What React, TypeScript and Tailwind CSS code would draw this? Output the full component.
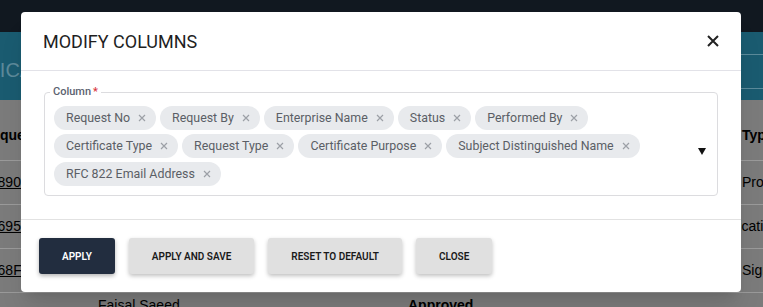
import React from "react"

const columns = [
  "Request No",
  "Request By",
  "Enterprise Name",
  "Status",
  "Performed By",
  "Certificate Type",
  "Request Type",
  "Certificate Purpose",
  "Subject Distinguished Name",
  "RFC 822 Email Address",
]

const rows = [
  { id: "12890D4E", by: "", status: "", type: "Protocol" },
  { id: "316950AB", by: "", status: "", type: "Certification", shift: true },
  { id: "4768F5C2", by: "", status: "", type: "Signing" },
  { id: "", by: "Faisal Saeed", status: "Approved", type: "" },
]

function Chip({ label }: { label: string }) {
  return (
    <span className="flex h-6 items-center rounded-full bg-[#e8eaed] pl-3 pr-[10px] text-[12.4px] text-[#5b5f66]">
      {label}
      <svg width="8" height="8" viewBox="0 0 8 8" className="ml-2">
        <path d="M1 1L7 7M7 1L1 7" stroke="#9ca0a6" strokeWidth="1.2" />
      </svg>
    </span>
  )
}

function Button({ label, primary }: { label: string; primary?: boolean }) {
  return (
    <button
      className={
        primary
          ? "h-9 rounded-[3px] bg-[#222d3f] px-[23px] text-[10px] font-semibold uppercase text-white shadow-[0_2px_4px_rgba(0,0,0,0.3)]"
          : "h-9 rounded-[3px] bg-[#e0e0e0] px-[23px] text-[10px] font-semibold uppercase text-[#1a1a1a] shadow-[0_2px_4px_rgba(0,0,0,0.25)]"
      }
    >
      {label}
    </button>
  )
}

export default function App() {
  return (
    <div className="relative h-[307px] w-[763px] overflow-hidden bg-[#7b7b7b] font-['Liberation_Sans',Arial,sans-serif] text-[14px] text-black">
      {/* page behind the modal, already dimmed */}
      <div className="h-8 bg-[#111820]" />
      <div className="flex h-[68px] items-center justify-between bg-[#1a5b70]">
        <span className="-ml-[72px] pt-[8px] text-[20px] text-[#5d8a9a]">CERTIFICATE REQUESTS</span>
        <div className="-mr-[40px] mt-[10px] h-[35px] w-[200px] border border-[#5b8a9a]" />
      </div>
      <div className="-ml-[18px]">
        <div className="flex h-[60px] items-center pt-[10px] font-bold">
          <div className="w-[116px] shrink-0">Request No</div>
          <div className="w-[310px] shrink-0">Request By</div>
          <div className="w-[334px] shrink-0">Status</div>
          <div className="shrink-0">Type</div>
        </div>
        {rows.map((r, i) => (
          <div
            key={i}
            className={
              i === 3
                ? "flex h-[44px] items-start border-t border-[#9a9a9a] pt-[2px]"
                : "flex h-[44px] items-center border-t border-[#9a9a9a]"
            }
          >
            <div className="w-[116px] shrink-0 underline">{r.id}</div>
            <div className="w-[310px] shrink-0">{r.by}</div>
            <div className="w-[334px] shrink-0 font-bold">{r.status}</div>
            <div className={r.shift ? "-ml-[37px] shrink-0 whitespace-nowrap" : "shrink-0 whitespace-nowrap"}>
              {r.type}
            </div>
          </div>
        ))}
      </div>

      {/* modal */}
      <div className="absolute inset-0 flex pl-[21px] pt-[12px]">
        <div className="h-[280px] w-[720px] rounded bg-white font-['Roboto',sans-serif] shadow-xl">
          <div className="flex h-[59px] items-center justify-between border-b border-[#e2e2e8] px-[22px]">
            <h2 className="text-[18px] text-[#1f1f1f]">MODIFY COLUMNS</h2>
            <svg width="12" height="12" viewBox="0 0 12 12">
              <path d="M1 1L11 11M11 1L1 11" stroke="#222" strokeWidth="2" />
            </svg>
          </div>
          <div className="px-[23px] pb-[23px] pt-[14px]">
            <fieldset className="rounded border border-[#dcdcdf] pb-[9px] pl-[9px] pt-[7px]">
              <legend className="-ml-[4px] px-[3px] text-[11px] font-medium leading-[14px] text-[#5c6270]">
                Column<span className="ml-[2px] text-[#d9363e]">*</span>
              </legend>
              <div className="flex items-center">
                <div className="flex flex-1 flex-wrap gap-1">
                  {columns.map((c) => (
                    <Chip key={c} label={c} />
                  ))}
                </div>
                <svg width="8" height="7" viewBox="0 0 8 7" className="ml-3 mr-[11px] mt-[10px]">
                  <polygon points="0,0 8,0 4,7" fill="#111" />
                </svg>
              </div>
            </fieldset>
          </div>
          <div className="flex gap-[14px] border-t border-[#e2e2e2] pl-[18px] pt-[18px]">
            <Button label="Apply" primary />
            <Button label="Apply and Save" />
            <Button label="Reset to Default" />
            <Button label="Close" />
          </div>
        </div>
      </div>
    </div>
  )
}
